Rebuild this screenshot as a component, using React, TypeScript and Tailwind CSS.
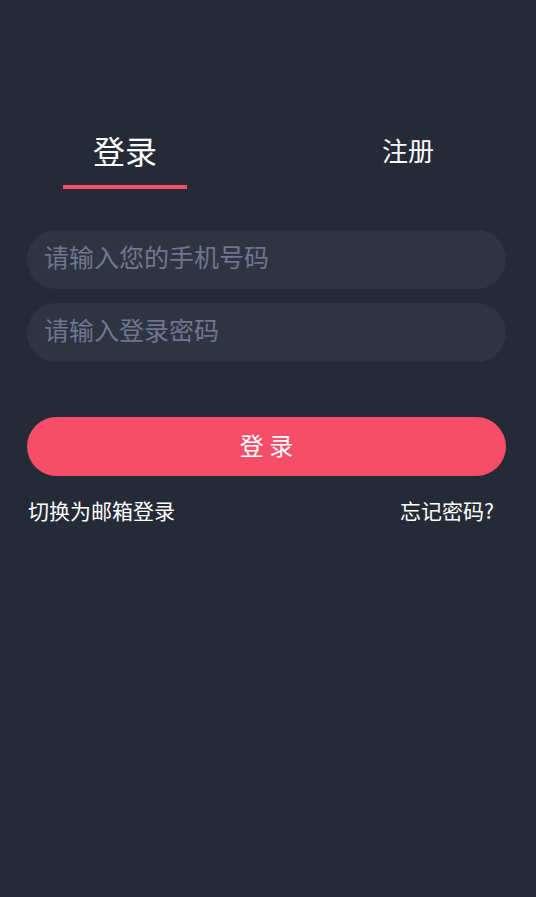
import { useState } from "react";

const FONT = { fontFamily: '"Noto Sans CJK SC", "Noto Sans", sans-serif' };

export default function App() {
  const [tab, setTab] = useState<"login" | "register">("login");

  return (
    <div className="min-h-screen bg-[#252a37] text-white" style={FONT}>
      {/* tabs */}
      <div className="flex gap-[159px] pl-[63px] pt-[129px]">
        <button
          className="flex w-[124px] flex-col items-center"
          onClick={() => setTab("login")}
        >
          <span className="text-[32px] leading-[42px]">登录</span>
          <span
            className={
              tab === "login"
                ? "mt-[14px] h-[4px] w-[124px] bg-[#f64d68]"
                : "mt-[14px] h-[4px] w-[124px]"
            }
          />
        </button>
        <button
          className="flex w-[124px] flex-col items-center"
          onClick={() => setTab("register")}
        >
          <span className="text-[26px] leading-[42px]">注册</span>
          <span
            className={
              tab === "register"
                ? "mt-[14px] h-[4px] w-[124px] bg-[#f64d68]"
                : "mt-[14px] h-[4px] w-[124px]"
            }
          />
        </button>
      </div>

      {/* form */}
      <div className="ml-[27px] mt-[41px] flex w-[479px] flex-col">
        <div className="flex h-[59px] items-center rounded-full bg-[#2f3442] pb-[5px] pl-[17px] pr-5">
          <input
            className="w-full bg-transparent text-[25px] text-white outline-none placeholder:text-[#707690]"
            placeholder="请输入您的手机号码"
          />
        </div>
        <div className="mt-[14px] flex h-[59px] items-center rounded-full bg-[#2f3442] pb-[5px] pl-[17px] pr-5">
          <input
            type="password"
            className="w-full bg-transparent text-[25px] text-white outline-none placeholder:text-[#707690]"
            placeholder="请输入登录密码"
          />
        </div>

        <button className="mt-[55px] h-[59px] rounded-full bg-[#f64d68] pb-[3px] text-[24px] text-white">
          登 录
        </button>

        <div className="mt-[20px] flex items-center justify-between pl-[1px] pr-[12px] text-[21px] leading-[28px]">
          <span>切换为邮箱登录</span>
          <span>忘记密码?</span>
        </div>
      </div>
    </div>
  );
}
